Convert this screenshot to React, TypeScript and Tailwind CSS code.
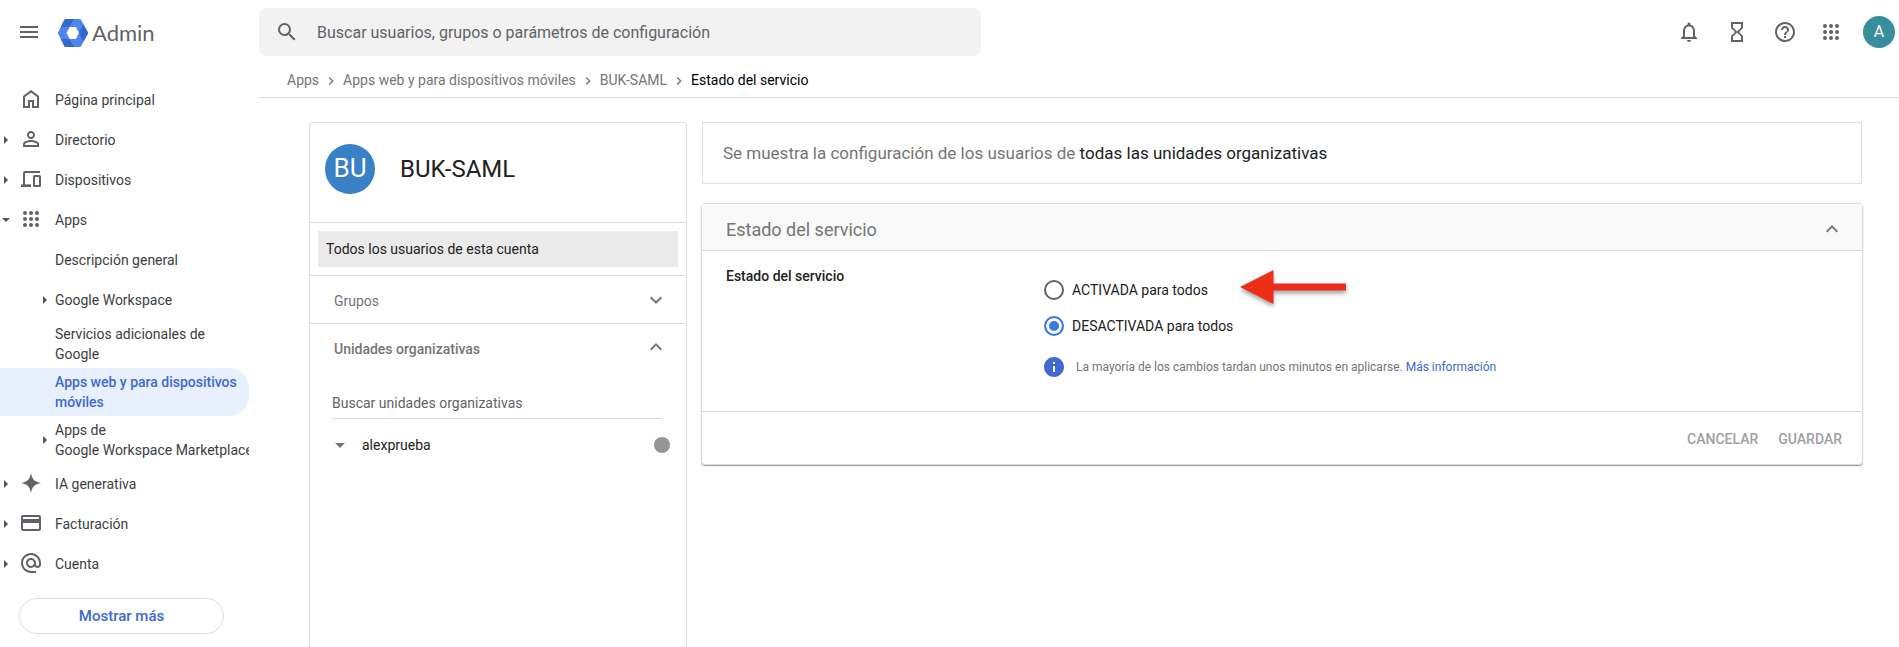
import type { ReactNode } from "react";
import {
  MdAlternateEmail,
  MdChevronRight,
  MdCreditCard,
  MdExpandLess,
  MdExpandMore,
  MdHelpOutline,
  MdHourglassEmpty,
  MdInfo,
  MdMenu,
  MdNotificationsNone,
  MdPersonOutline,
  MdSearch,
} from "react-icons/md";

type Caret = "right" | "down";

function HomeIcon() {
  return (
    <svg viewBox="0 0 24 24" className="size-6" fill="currentColor">
      <path d="M6 19h3v-6h6v6h3v-9l-6-4.5L6 10v9zm-2 2V9l8-6 8 6v12h-7v-6h-2v6H4z" />
    </svg>
  );
}

function DevicesIcon() {
  return (
    <svg viewBox="0 0 24 24" className="size-6" fill="none" stroke="currentColor" strokeWidth="2">
      <path d="M21 5H6a1 1 0 0 0-1 1v12" />
      <path d="M2 18.7h10" strokeWidth="2.6" />
      <rect x="15" y="9" width="6" height="10" rx="0.5" />
    </svg>
  );
}

function DotsIcon() {
  return (
    <svg viewBox="0 0 24 24" className="size-6" fill="currentColor">
      {[6, 12, 18].map((y) => [6, 12, 18].map((x) => <circle key={`${x}-${y}`} cx={x} cy={y} r="2" />))}
    </svg>
  );
}

function SparkIcon() {
  return (
    <svg viewBox="0 0 24 24" className="size-6" fill="currentColor">
      <path d="M12 2c1.200 6.500 3.500 8.800 10 10-6.500 1.200-8.800 3.500-10 10-1.200-6.500-3.500-8.800-10-10 6.500-1.200 8.800-3.500 10-10z" />
    </svg>
  );
}

function AdminLogo() {
  return (
    <svg viewBox="0 0 30 28" className="h-7 w-[30px]">
      <path
        fill="#5086ec"
        d="M8 0h13.500a2 2 0 0 1 1.700 1l6.500 12a2 2 0 0 1 0 2l-6.500 12a2 2 0 0 1-1.700 1H8a2 2 0 0 1-1.700-1L.300 15a2 2 0 0 1 0-2l6-12A2 2 0 0 1 8 0z"
      />
      <path fill="#3468cf" d="M8 0h8l-4.600 8H2.900l3.400-7A2 2 0 0 1 8 0z" />
      <path fill="#3468cf" d="M25.300 5.500 29.700 13a2 2 0 0 1 0 2l-4.400 7.500L21 14z" />
      <path fill="#3468cf" d="M2.900 20h8.500l4.600 8H8a2 2 0 0 1-1.700-1z" />
      <path fill="#fff" d="M11.700 8h6.200L21 14l-3.100 6h-6.200L8.500 14z" />
    </svg>
  );
}

function CaretMark({ dir }: { dir: Caret }) {
  return dir === "right" ? (
    <svg viewBox="0 0 4 8" className="h-2 w-1" fill="#455a64">
      <path d="M0 0l4 4-4 4z" />
    </svg>
  ) : (
    <svg viewBox="0 0 8 4" className="h-1 w-2" fill="#455a64">
      <path d="M0 0h8L4 4z" />
    </svg>
  );
}

function NavItem({ icon, label, caret }: { icon: ReactNode; label: string; caret?: Caret }) {
  return (
    <li>
      <a href="#" className="flex h-10 items-center">
        <span className="flex w-[19px] shrink-0 justify-center pr-[7px]">{caret && <CaretMark dir={caret} />}</span>
        <span className="mb-0.5 w-9 shrink-0 text-[#5f6368]">{icon}</span>
        <span className="whitespace-nowrap">{label}</span>
      </a>
    </li>
  );
}

function SubItem({ lines, caret, active }: { lines: string[]; caret?: boolean; active?: boolean }) {
  return (
    <li>
      <a
        href="#"
        className={
          "flex items-center " +
          (lines.length > 1 ? "h-12 " : "h-10 ") +
          (active ? "rounded-r-[20px] bg-[#e8f0fe] font-medium text-[#3f68d0]" : "")
        }
      >
        <span className="flex w-[55px] shrink-0 justify-end pr-2">{caret && <CaretMark dir="right" />}</span>
        <span className="whitespace-nowrap leading-5">
          {lines.map((line) => (
            <span key={line} className="block">
              {line}
            </span>
          ))}
        </span>
      </a>
    </li>
  );
}

function Sidebar() {
  return (
    <nav className="w-[249px] shrink-0 overflow-hidden pt-6 text-[14px] text-[#3c4043]">
      <ul>
        <NavItem icon={<HomeIcon />} label="Página principal" />
        <NavItem icon={<MdPersonOutline className="size-6" />} label="Directorio" caret="right" />
        <NavItem icon={<DevicesIcon />} label="Dispositivos" caret="right" />
        <NavItem icon={<DotsIcon />} label="Apps" caret="down" />
        <SubItem lines={["Descripción general"]} />
        <SubItem lines={["Google Workspace"]} caret />
        <SubItem lines={["Servicios adicionales de", "Google"]} />
        <SubItem lines={["Apps web y para dispositivos", "móviles"]} active />
        <SubItem lines={["Apps de", "Google Workspace Marketplace"]} caret />
        <NavItem icon={<SparkIcon />} label="IA generativa" caret="right" />
        <NavItem icon={<MdCreditCard className="size-6" />} label="Facturación" caret="right" />
        <NavItem icon={<MdAlternateEmail className="size-6" />} label="Cuenta" caret="right" />
      </ul>
      <button className="mt-3.5 ml-[19px] h-9 w-[205px] rounded-full border border-[#dadce0] text-[15px] font-medium text-[#3f68d0]">
        Mostrar más
      </button>
    </nav>
  );
}

function Header() {
  return (
    <header className="flex h-14 items-end text-[#5f6368]">
      <div className="flex h-12 w-[259px] shrink-0 items-center pl-[17px]">
        <button aria-label="Menú principal">
          <MdMenu className="size-6" />
        </button>
        <a href="#" className="ml-[17px] flex items-center gap-1 pt-0.5">
          <AdminLogo />
          <span className="font-[Lato,sans-serif] text-[22px] leading-7">Admin</span>
        </a>
      </div>
      <label className="flex h-12 w-[722px] items-center gap-[18px] rounded-lg bg-[#f2f2f2] pl-4">
        <MdSearch className="size-6" />
        <input
          aria-label="Buscar"
          placeholder="Buscar usuarios, grupos o parámetros de configuración"
          className="h-full flex-1 bg-transparent text-[16px] outline-none placeholder:text-[#5f6368]"
        />
      </label>
      <div className="ml-auto flex h-12 items-center gap-6 pr-1">
        <button aria-label="Notificaciones">
          <MdNotificationsNone className="size-6" />
        </button>
        <button aria-label="Tareas">
          <MdHourglassEmpty className="size-6" />
        </button>
        <button aria-label="Ayuda">
          <MdHelpOutline className="size-6" />
        </button>
        <button aria-label="Aplicaciones de Google" className="-ml-0.5">
          <DotsIcon />
        </button>
        <button className="-ml-1 flex size-8 items-center justify-center rounded-full bg-[#388e9e] text-[16px] text-white">
          A
        </button>
      </div>
    </header>
  );
}

function Breadcrumbs() {
  return (
    <ol className="flex h-[42px] items-center gap-1 border-b border-[#dadce0] pt-2 pl-7 text-[14px] text-[#757575]">
      {["Apps", "Apps web y para dispositivos móviles", "BUK-SAML"].map((crumb) => (
        <li key={crumb} className="flex items-center gap-1">
          <a href="#">{crumb}</a>
          <MdChevronRight className="size-4" />
        </li>
      ))}
      <li className="text-black">Estado del servicio</li>
    </ol>
  );
}

function ScopePanel() {
  return (
    <aside className="w-[378px] shrink-0 rounded-t-sm border border-b-0 border-[#e0e0e0]">
      <div className="flex h-[99px] items-center gap-[25px] pb-2 pl-[15px]">
        <span className="flex size-[50px] items-center justify-center rounded-full bg-[#3881c7] text-[26px] text-white">
          BU
        </span>
        <h1 className="text-[24px] text-[#212121]">BUK-SAML</h1>
      </div>
      <div className="border-y border-[#dadada] p-2">
        <button className="block h-9 w-full bg-[#eaeaea] px-2 text-left text-[14px] text-[#212121]">
          Todos los usuarios de esta cuenta
        </button>
      </div>
      <button className="flex h-12 w-full items-center justify-between border-b border-[#dadada] pr-[18px] pl-6 text-[14px] text-[#757575]">
        <span className="pt-1">Grupos</span>
        <MdExpandMore className="size-6" />
      </button>
      <button className="flex h-12 w-full items-center justify-between pr-[18px] pb-0.5 pl-6 text-[14px] font-medium text-[#757575]">
        <span className="pt-1">Unidades organizativas</span>
        <MdExpandLess className="size-6" />
      </button>
      <div className="pt-[15px] pr-6 pl-[22px]">
        <input
          aria-label="Buscar unidades organizativas"
          placeholder="Buscar unidades organizativas"
          className="h-8 w-full border-b border-[#dadada] text-[14px] outline-none placeholder:text-[#5f6368]"
        />
      </div>
      <div className="mt-2 flex h-9 items-center pr-4 pl-[25px] text-[14px] text-[#212121]">
        <svg viewBox="0 0 10 5" className="h-[5px] w-2.5" fill="#757575">
          <path d="M0 0h10L5 5z" />
        </svg>
        <span className="ml-[17px]">alexprueba</span>
        <span className="ml-auto size-4 rounded-full bg-[#959595]" />
      </div>
    </aside>
  );
}

function RadioOption({ label, checked, children }: { label: string; checked?: boolean; children?: ReactNode }) {
  return (
    <div className="relative flex h-9 w-fit items-center">
      <label className="flex items-center gap-2">
        <input
          type="radio"
          name="estado"
          defaultChecked={checked}
          className="size-5 appearance-none rounded-full border-2 border-[#5f6368] checked:border-[#3b78e7] checked:bg-[#3b78e7] checked:shadow-[inset_0_0_0_3px_white]"
        />
        <span>{label}</span>
      </label>
      {children}
    </div>
  );
}

function ArrowMark() {
  return (
    <svg
      viewBox="0 0 106 34"
      className="absolute -top-0.5 left-full ml-8 h-[34px] w-[106px] overflow-visible drop-shadow-[0_3px_2px_rgba(0,0,0,0.35)]"
      fill="#ea2e18"
    >
      <path d="M0 17 33.500 0v13.500H106v7H33.500V34z" />
    </svg>
  );
}

function StatusCard() {
  return (
    <section className="rounded-sm border border-[#dadada] shadow-[0_1px_1px_rgba(0,0,0,0.4)]">
      <button className="flex h-[47px] w-full items-center justify-between border-b border-[#dadada] bg-[#f9f9f9] pt-1 pr-[18px] pl-6 text-[18px] text-[#757575]">
        Estado del servicio
        <MdExpandLess className="size-6" />
      </button>
      <div className="flex h-[160px] pl-6 text-[14px] text-[#212121]">
        <h2 className="w-[318px] shrink-0 pt-[15px] font-medium">Estado del servicio</h2>
        <div className="pt-[21px]">
          <RadioOption label="ACTIVADA para todos">
            <ArrowMark />
          </RadioOption>
          <RadioOption label="DESACTIVADA para todos" checked />
          <div className="mt-[13px] flex items-center gap-2.5 text-[12px] text-[#757575]">
            <MdInfo className="-m-0.5 size-6 text-[#3f68d0]" />
            <p className="ml-0.5">
              La mayoría de los cambios tardan unos minutos en aplicarse.{" "}
              <a href="#" className="text-[#3f68d0]">
                Más información
              </a>
            </p>
          </div>
        </div>
      </div>
      <div className="flex h-[53px] items-center justify-end gap-5 border-t border-[#dadada] pt-0.5 pr-5 text-[14px] font-medium text-[#a0a0a0]">
        <button>CANCELAR</button>
        <button>GUARDAR</button>
      </div>
    </section>
  );
}

export default function App() {
  return (
    <div className="flex min-h-screen flex-col bg-white font-[Roboto,sans-serif]">
      <Header />
      <div className="flex flex-1">
        <Sidebar />
        <main className="ml-2.5 flex min-w-0 flex-1 flex-col">
          <Breadcrumbs />
          <div className="flex flex-1 gap-[14px] pt-6 pr-9 pl-[50px]">
            <ScopePanel />
            <div className="flex min-w-0 flex-1 flex-col gap-[19px]">
              <p className="mr-px ml-px flex h-[62px] items-center border border-[#e0e0e0] px-5 pt-0.5 text-[17px] text-[#757575]">
                <span>
                  Se muestra la configuración de los usuarios de{" "}
                  <span className="text-[#212121]">todas las unidades organizativas</span>
                </span>
              </p>
              <StatusCard />
            </div>
          </div>
        </main>
      </div>
    </div>
  );
}
